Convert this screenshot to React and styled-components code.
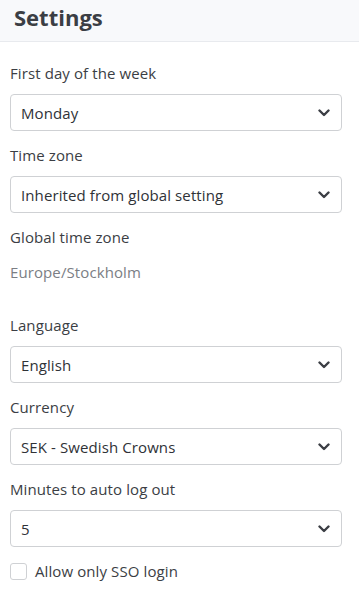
import React, { useState } from 'react';
import styled, { createGlobalStyle } from 'styled-components';

const GlobalStyle = createGlobalStyle`
  body {
    margin: 0;
    background: #ffffff;
    font-family: "Open Sans", "Noto Sans", sans-serif;
    color: #3a3d44;
  }
`;

const Page = styled.div`
  width: 359px;
`;

const Header = styled.div`
  height: 41px;
  background: #f8f9fb;
  border-bottom: 1px solid #e8eaee;
  padding: 0 14px;
  display: flex;
  align-items: center;
`;

const Title = styled.h1`
  margin: 0;
  margin-top: -7px;
  font-size: 22px;
  font-weight: 700;
  color: #3b3e44;
`;

const Form = styled.div`
  padding: 21px 17px 0 10px;
  display: flex;
  flex-direction: column;
`;

const Label = styled.div`
  font-size: 15px;
  line-height: 21px;
  letter-spacing: 0.1px;
  color: #3b3e44;
  margin-bottom: 10px;
`;

const Value = styled.div`
  font-size: 15px;
  line-height: 21px;
  letter-spacing: 0.1px;
  color: #7b7e84;
  margin-top: 4px;
  margin-bottom: 32px;
`;

const SelectWrap = styled.div`
  position: relative;
  margin-bottom: 14px;
`;

const Select = styled.select`
  appearance: none;
  width: 100%;
  height: 37px;
  padding: 0 36px 0 10px;
  border: 1px solid #cfd1d4;
  border-radius: 4px;
  background: #ffffff;
  font-family: inherit;
  font-size: 15px;
  letter-spacing: 0.1px;
  color: #2f3237;
  outline: none;
`;

const Chevron = styled.svg`
  position: absolute;
  right: 12px;
  top: 50%;
  transform: translateY(-50%);
  pointer-events: none;
`;

const CheckRow = styled.label`
  display: flex;
  align-items: center;
  gap: 8px;
  font-size: 15px;
  letter-spacing: 0.1px;
  color: #3b3e44;
`;

const Box = styled.span`
  width: 15px;
  height: 15px;
  border: 1px solid #cfd1d4;
  border-radius: 3px;
  background: ${p => (p.$checked ? '#3b82f6' : '#fff')};
`;

const Field = ({ label, value, options }) => (
  <>
    <Label>{label}</Label>
    <SelectWrap>
      <Select defaultValue={value}>
        {options.map(o => (
          <option key={o}>{o}</option>
        ))}
      </Select>
      <Chevron width="12" height="8" viewBox="0 0 12 8">
        <path d="M1.5 1.5 L6 6 L10.5 1.5" fill="none" stroke="#3b3e44" strokeWidth="2.4" strokeLinecap="round" strokeLinejoin="round" />
      </Chevron>
    </SelectWrap>
  </>
);

const App = () => {
  const [sso, setSso] = useState(false);

  return (
    <Page>
      <GlobalStyle />
      <Header>
        <Title>Settings</Title>
      </Header>
      <Form>
        <Field label="First day of the week" value="Monday" options={['Monday', 'Sunday', 'Saturday']} />
        <Field label="Time zone" value="Inherited from global setting" options={['Inherited from global setting', 'Europe/Stockholm']} />
        <Label>Global time zone</Label>
        <Value>Europe/Stockholm</Value>
        <Field label="Language" value="English" options={['English', 'Svenska']} />
        <Field label="Currency" value="SEK - Swedish Crowns" options={['SEK - Swedish Crowns', 'EUR - Euro']} />
        <Field label="Minutes to auto log out" value="5" options={['5', '10', '15', '30']} />
        <CheckRow onClick={() => setSso(!sso)}>
          <Box $checked={sso} />
          Allow only SSO login
        </CheckRow>
      </Form>
    </Page>
  );
};

export default App;
